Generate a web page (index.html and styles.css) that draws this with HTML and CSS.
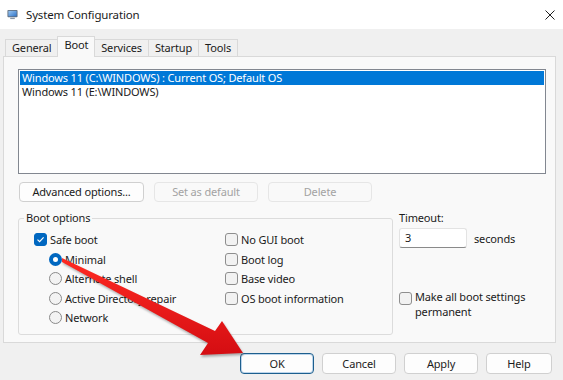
FILE: index.html
```html
<!DOCTYPE html>
<html lang="en">
<head>
  <meta charset="UTF-8" />
  <title>System Configuration</title>
  <link rel="stylesheet" href="styles.css">
</head>
<body>
  <div class="window">
    <div class="titlebar">
      <svg class="app-icon" viewBox="0 0 12 12">
        <defs>
          <linearGradient id="scr" x1="0" y1="0" x2="1" y2="1">
            <stop offset="0" stop-color="#9cc8f2" />
            <stop offset="1" stop-color="#2f73c8" />
          </linearGradient>
        </defs>
        <rect x="0.5" y="1" width="11" height="8" rx="1" fill="#5d6b7c" />
        <rect x="1.5" y="2" width="9" height="6" fill="url(#scr)" />
        <rect x="3.5" y="9.5" width="5" height="1.5" fill="#8b97a6" />
      </svg>
      <span class="title">System Configuration</span>
      <span class="close">
        <svg viewBox="0 0 10 10" width="10" height="10">
          <path d="M0.5 0.5 L9.5 9.5 M9.5 0.5 L0.5 9.5" stroke="#1f1f1f" stroke-width="1" fill="none" />
        </svg>
      </span>
    </div>

    <div class="tabs">
      <div class="tab">General</div>
      <div class="tab active">Boot</div>
      <div class="tab">Services</div>
      <div class="tab">Startup</div>
      <div class="tab">Tools</div>
    </div>

    <div class="panel">
      <div class="oslist">
        <div class="os selected">Windows 11 (C:\WINDOWS) : Current OS; Default OS</div>
        <div class="os">Windows 11 (E:\WINDOWS)</div>
      </div>

      <div class="list-buttons">
        <div class="btn adv">Advanced options...</div>
        <div class="btn disabled">Set as default</div>
        <div class="btn disabled">Delete</div>
      </div>

      <div class="lower">
        <fieldset class="group">
          <legend>Boot options</legend>
          <div class="cols">
            <div class="col left">
              <div class="row"><span class="box checked"><svg viewBox="0 0 11 11"><path d="M2.5 5.6 L4.6 7.6 L8.6 3.4" stroke="#fff" stroke-width="1.2" fill="none" /></svg></span>Safe boot</div>
              <div class="row sub"><span class="radio on"></span>Minimal</div>
              <div class="row sub"><span class="radio"></span>Alternate shell</div>
              <div class="row sub"><span class="radio"></span>Active Directory repair</div>
              <div class="row sub"><span class="radio"></span>Network</div>
            </div>
            <div class="col">
              <div class="row"><span class="box"></span>No GUI boot</div>
              <div class="row"><span class="box"></span>Boot log</div>
              <div class="row"><span class="box"></span>Base video</div>
              <div class="row"><span class="box"></span>OS boot information</div>
            </div>
          </div>
        </fieldset>

        <div class="side">
          <div class="side-label">Timeout:</div>
          <div class="timeout">
            <div class="input">3</div>
            <span>seconds</span>
          </div>
          <div class="perm">
            <span class="box"></span>
            <div class="perm-text">Make all boot settings<br>permanent</div>
          </div>
        </div>
      </div>
    </div>

    <div class="actions">
      <div class="btn default">OK</div>
      <div class="btn">Cancel</div>
      <div class="btn">Apply</div>
      <div class="btn help">Help</div>
    </div>

    <svg class="arrow" viewBox="0 0 563 380">
      <defs>
        <linearGradient id="red" x1="0" y1="0" x2="0" y2="1">
          <stop offset="0" stop-color="#ff2a22" />
          <stop offset="1" stop-color="#d40d12" />
        </linearGradient>
      </defs>
      <polygon points="62,258 215,331 222,321 243,353 200,355 208,343 62,262" fill="url(#red)" />
    </svg>
  </div>
</body>
</html>
```

FILE: styles.css
```css
* {
  box-sizing: border-box;
}

body {
  margin: 0;
  width: 563px;
  height: 380px;
  overflow: hidden;
  background: #f0f0f0;
  font-family: "Noto Sans", sans-serif;
  font-size: 11px;
  letter-spacing: -0.16px;
  color: #1b1b1b;
}

.window {
  position: relative;
  height: 380px;
}

.titlebar {
  height: 29px;
  background: #fff;
  display: flex;
  align-items: center;
  padding-left: 7px;
}

.app-icon {
  width: 11px;
  height: 11px;
}

.title {
  margin-left: 8px;
  font-size: 11.5px;
}

.close {
  margin-left: auto;
  width: 26px;
  display: flex;
  align-items: center;
  justify-content: center;
}

/* tabs */
.tabs {
  height: 27px;
  display: flex;
  align-items: flex-end;
  padding-left: 5px;
}

.tab {
  height: 17px;
  line-height: 15px;
  padding: 0 6px;
  border: 1px solid #d9d9d9;
  border-bottom: none;
  background: #f0f0f0;
  margin-right: -1px;
}

.tab.active {
  height: 21px;
  margin-bottom: -1px;
  background: #f9f9f9;
  position: relative;
  z-index: 1;
}

.panel {
  margin: 0 7px 0 3px;
  height: 287px;
  border: 1px solid #d9d9d9;
  background: #f9f9f9;
  padding: 12px 9px 0 14px;
}

.oslist {
  height: 105px;
  border: 1px solid #828790;
  background: #fff;
  padding: 1px;
}

.os {
  height: 14px;
  line-height: 14px;
  padding-left: 2px;
}

.os.selected {
  background: #0078d7;
  color: #fff;
}

/* buttons */
.btn {
  height: 20px;
  line-height: 18px;
  border: 1px solid #d0d0d0;
  border-radius: 4px;
  background: #fdfdfd;
  text-align: center;
}

.btn.disabled {
  border-color: #e6e6e6;
  background: #f9f9f9;
  color: #a3a3a3;
}

.list-buttons {
  display: flex;
  gap: 10px;
  margin: 8px 0 0 1px;
}

.list-buttons .btn {
  width: 104px;
}

.list-buttons .btn.adv {
  width: 125px;
}

/* boot options */
.lower {
  display: flex;
  margin-top: 9px;
}

.group {
  width: 375px;
  height: 124px;
  margin: 0;
  padding: 0 0 0 5px;
  border: 1px solid #dcdcdc;
  border-radius: 3px;
}

.group legend {
  padding: 0 2px;
  line-height: 14px;
}

.cols {
  display: flex;
  padding: 5px 0 0 10px;
}

.col.left {
  width: 191px;
}

.row {
  height: 19.5px;
  display: flex;
  align-items: center;
  gap: 3px;
}

.row.sub {
  margin-left: 15px;
}

.box {
  width: 13px;
  height: 13px;
  flex: none;
  border: 1px solid #8e8e8e;
  border-radius: 3px;
  background: #f2f2f2;
}

.box.checked {
  background: #0067c0;
  border-color: #0067c0;
}

.box svg {
  display: block;
  width: 11px;
  height: 11px;
}

.radio {
  width: 13px;
  height: 13px;
  flex: none;
  border: 1px solid #8a8a8a;
  border-radius: 50%;
  background: #f3f3f3;
}

.radio.on {
  border: 4px solid #0067c0;
  background: #fff;
}

.side {
  margin-left: 6px;
}

.side-label {
  line-height: 14px;
}

.timeout {
  display: flex;
  align-items: center;
  gap: 7px;
  margin-top: 3px;
}

.input {
  width: 68px;
  height: 20px;
  line-height: 18px;
  padding-left: 5px;
  border: 1px solid #e3e3e3;
  border-bottom-color: #8a8a8a;
  border-radius: 3px;
  background: #fff;
}

.perm {
  display: flex;
  align-items: flex-start;
  gap: 3px;
  margin-top: 43px;
}

.perm .box {
  margin-top: 1px;
}

.perm-text {
  line-height: 15px;
  margin-top: -2px;
}

/* dialog buttons */
.actions {
  display: flex;
  justify-content: flex-end;
  gap: 8px;
  padding-right: 11px;
  margin-top: 10px;
}

.actions .btn {
  width: 74px;
  height: 21px;
  line-height: 19px;
}

.actions .btn.help {
  width: 66px;
}

.actions .btn.default {
  border-color: #1d5f8e;
  box-shadow: inset 0 0 0 1px rgba(0, 95, 184, 0.25);
}

.arrow {
  position: absolute;
  left: 0;
  top: 0;
  width: 563px;
  height: 380px;
  pointer-events: none;
  filter: drop-shadow(1px 2px 1px rgba(0, 0, 0, 0.3));
}
```
